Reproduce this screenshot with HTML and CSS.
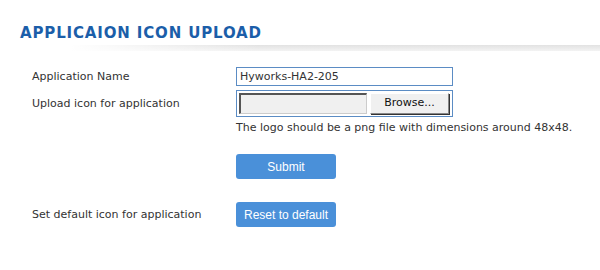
FILE: index.html
```html
<!DOCTYPE html>
<html lang="en">
<head>
    <meta charset="UTF-8">
    <title>Application Icon Upload</title>
    <link rel="stylesheet" href="styles.css">
</head>
<body>
    <div class="header">
        <h2 class="title">APPLICAION ICON UPLOAD</h2>
    </div>
    <div class="divider"></div>

    <form class="form">
        <label class="label" for="appName">Application Name</label>
        <div class="field">
            <input type="text" id="appName" class="text-input" value="Hyworks-HA2-205">
        </div>

        <label class="label label-file" for="iconFile">Upload icon for application</label>
        <div class="field">
            <div class="file-box">
                <span class="file-path"></span>
                <label class="browse" for="iconFile">Browse...</label>
                <input type="file" id="iconFile" accept="image/png">
            </div>
            <p class="hint">The logo should be a png file with dimensions around 48x48.</p>
            <button type="button" class="btn btn-submit">Submit</button>
        </div>

        <span class="label label-btn">Set default icon for application</span>
        <div class="field">
            <button type="button" class="btn">Reset to default</button>
        </div>
    </form>
</body>
</html>
```

FILE: styles.css
```css
body {
    margin: 0;
    background-color: #fff;
    color: #333;
    font-family: "DejaVu Sans", Verdana, sans-serif;
    font-size: 11px;
}

.header {
    height: 45px;
    padding-left: 20px;
    box-sizing: border-box;
}

.title {
    margin: 0;
    padding-top: 25px;
    font-size: 15px;
    line-height: 16px;
    font-weight: bold;
    letter-spacing: 0.85px;
    color: #1b5ea9;
}

.divider {
    height: 6px;
    background: linear-gradient(to right, #fff 70px, rgba(255, 255, 255, 0) 260px),
                linear-gradient(to bottom, #e2e2e2, #f3f3f3);
}

.form {
    display: grid;
    grid-template-columns: 204px 1fr;
    align-items: start;
    padding-left: 32px;
    margin-top: 16px;
    row-gap: 4px;
}

.label {
    line-height: 19px;
}

.label-file {
    line-height: 27px;
}

.label-btn {
    line-height: 25px;
}

.text-input {
    width: 217px;
    height: 19px;
    box-sizing: border-box;
    border: 1px solid #5b8cc4;
    padding: 0 3px;
    font-family: inherit;
    font-size: 11px;
    color: #333;
    outline: none;
}

.file-box {
    display: flex;
    gap: 3px;
    width: 217px;
    height: 27px;
    box-sizing: border-box;
    border: 1px solid #5b8cc4;
    padding: 2px;
}

.file-path {
    width: 128px;
    box-sizing: border-box;
    background-color: #f0f0f0;
    border: 1px solid #ccc;
    border-top: 2px solid #555;
    border-left: 2px solid #555;
}

.browse {
    width: 79px;
    box-sizing: border-box;
    background-color: #f0f0f0;
    border: 1px solid #888;
    border-top-color: #fff;
    border-left-color: #fff;
    box-shadow: 1px 1px 0 #333;
    text-align: center;
    line-height: 17px;
    font-size: 11px;
    color: #111;
    cursor: pointer;
}

input[type="file"] {
    display: none;
}

.hint {
    margin: 3px 0 0;
    line-height: 16px;
}

.btn {
    display: block;
    width: 100px;
    height: 25px;
    border: none;
    border-radius: 3px;
    background-color: #4a90d9;
    color: #fff;
    font-family: "Liberation Sans", Arial, sans-serif;
    font-size: 12px;
    cursor: pointer;
}

.btn-submit {
    margin: 18px 0 19px;
}
```
